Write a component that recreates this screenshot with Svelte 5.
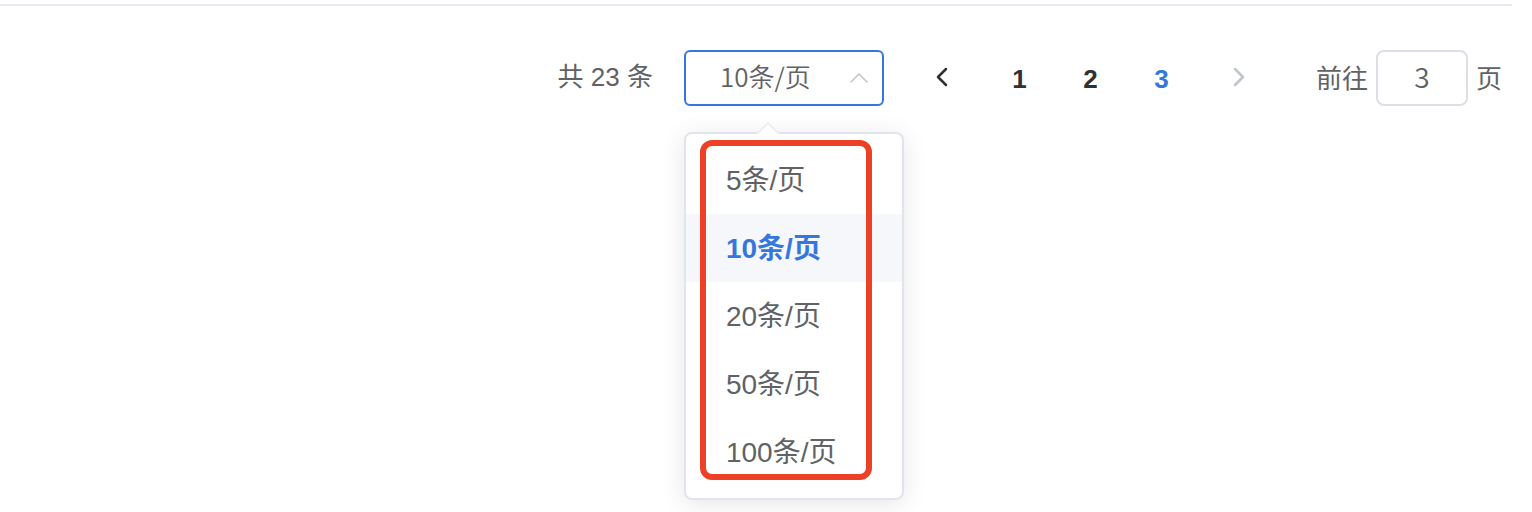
<script>
  const sizes = [5, 10, 20, 50, 100];
  const pages = [1, 2, 3];
  let size = $state(10);
  let current = $state(3);
  let jump = $state('3');
</script>

<main>
  <hr />
  <nav class="pagination" aria-label="分页">
    <span class="total">共 23 条</span>

    <div class="sizes">
      <select aria-label="每页条数" bind:value={size}>
        {#each sizes as n}
          <option value={n}>{n}条/页</option>
        {/each}
      </select>
      <svg class="caret" viewBox="0 0 18 10" aria-hidden="true">
        <path d="M1 9 9 1 17 9" />
      </svg>

      <div class="menu">
        <svg class="tip" viewBox="0 0 22 12" aria-hidden="true">
          <path class="fill" d="M0 12 11 1 22 12Z" />
          <path class="edge" d="M1 11 11 1 21 11" />
        </svg>
        <ul>
          {#each sizes as n}
            <li>
              <button class="choice" class:selected={n === size} onclick={() => (size = n)}>{n}条/页</button>
            </li>
          {/each}
        </ul>
        <div class="mark"></div>
      </div>
    </div>

    <div class="pager">
      <button class="step" aria-label="上一页" onclick={() => (current = Math.max(1, current - 1))}>
        <svg viewBox="0 0 12 20" aria-hidden="true"><path d="M10 2 2 10 10 18" /></svg>
      </button>
      {#each pages as p}
        <button class="page" class:active={p === current} onclick={() => (current = p)}>{p}</button>
      {/each}
      <button class="step" aria-label="下一页" disabled={current === 3} onclick={() => (current += 1)}>
        <svg viewBox="0 0 12 20" aria-hidden="true"><path d="M2 2 10 10 2 18" /></svg>
      </button>
    </div>

    <label class="jump">
      <span>前往</span>
      <input type="text" inputmode="numeric" bind:value={jump} />
      <span>页</span>
    </label>
  </nav>
</main>

<style>
  :global(body) {
    margin: 0;
    background: #fff;
  }
  main {
    box-sizing: border-box;
    min-height: 100vh;
    padding-top: 4px;
    font-family: "Liberation Sans", "Noto Sans CJK SC", sans-serif;
    font-size: 26px;
    color: #606266;
  }
  hr {
    height: 2px;
    margin: 0 20px 0 0;
    border: 0;
    background: #e6eaf5;
  }
  button,
  input,
  select {
    box-sizing: border-box;
    margin: 0;
    font: inherit;
    color: inherit;
    outline: none;
  }
  button {
    padding: 0;
    border: 0;
    background: none;
    cursor: pointer;
  }
  .pagination {
    display: flex;
    justify-content: flex-end;
    align-items: center;
    padding: 44px 30px 0 0;
    line-height: 56px;
    white-space: nowrap;
  }
  .total {
    margin-right: 31px;
    line-height: 54px;
    padding-bottom: 2px;
  }
  .sizes {
    position: relative;
    width: 200px;
    height: 56px;
    margin-right: 16px;
  }
  select {
    display: block;
    width: 100%;
    height: 56px;
    padding: 0 34px 4px;
    border: 2px solid #3577dc;
    border-radius: 6px;
    background: #fff;
    appearance: none;
    font-family: "Noto Sans CJK SC", sans-serif;
    font-weight: 350;
    line-height: 48px;
  }
  .caret {
    position: absolute;
    top: 23px;
    right: 16px;
    width: 18px;
    height: 10px;
  }
  .caret path {
    fill: none;
    stroke: #c0c4cc;
    stroke-width: 1.5;
    stroke-linecap: round;
  }
  .menu {
    position: absolute;
    z-index: 10;
    top: 82px;
    left: 0;
    box-sizing: border-box;
    width: 220px;
    padding: 12px 0;
    border: 2px solid #dfe4ed;
    border-radius: 8px;
    background: #fff;
    box-shadow: 0 4px 24px rgba(0, 0, 0, 0.1);
  }
  .tip {
    position: absolute;
    top: -12px;
    left: 71px;
    width: 22px;
    height: 12px;
  }
  .fill {
    fill: #fff;
  }
  .edge {
    fill: none;
    stroke: #e6eaf3;
    stroke-width: 1.5;
  }
  ul {
    margin: 0;
    padding: 0;
    list-style: none;
  }
  .choice {
    display: block;
    width: 100%;
    height: 68px;
    padding: 2px 40px 0;
    font-size: 28px;
    line-height: 66px;
    text-align: left;
  }
  .selected {
    background: #f5f7fb;
    color: #3577dc;
    font-weight: 700;
  }
  .mark {
    position: absolute;
    inset: 6px 30px 18px 14px;
    border: 6px solid #ec4127;
    border-radius: 12px;
    pointer-events: none;
  }
  .pager {
    display: flex;
    color: #303133;
  }
  .step {
    display: flex;
    justify-content: center;
    align-items: center;
    width: 84px;
    height: 54px;
  }
  .step svg {
    width: 12px;
    height: 20px;
  }
  .step path {
    fill: none;
    stroke: #303133;
    stroke-width: 2.5;
    stroke-linecap: round;
    stroke-linejoin: round;
  }
  .step:disabled path {
    stroke: #c0c4cc;
  }
  .page {
    width: 71px;
    height: 56px;
    padding-top: 2px;
    font-weight: 700;
    line-height: 54px;
  }
  .active {
    color: #3577dc;
  }
  .jump {
    display: flex;
    align-items: center;
    gap: 8px;
    margin-left: 35px;
  }
  .jump span {
    line-height: 54px;
    padding-top: 2px;
  }
  input {
    width: 92px;
    height: 56px;
    padding: 0 6px 4px;
    border: 2px solid #dcdfe6;
    border-radius: 8px;
    background: #fff;
    font-family: "Noto Sans CJK SC", sans-serif;
    font-size: 28px;
    font-weight: 350;
    text-align: center;
  }
</style>
